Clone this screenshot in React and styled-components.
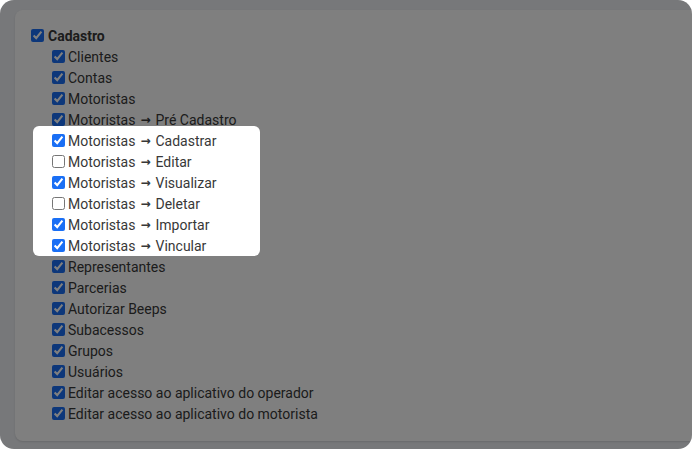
import React from "react";
import styled, { createGlobalStyle } from "styled-components";

const GlobalStyle = createGlobalStyle`
  html, body {
    margin: 0;
    padding: 0;
    background: #fff;
  }
  body {
    font-family: Roboto, "Liberation Sans", Arial, sans-serif;
  }
`;

const Frame = styled.div`
  position: relative;
  width: 692px;
  height: 449px;
  box-sizing: border-box;
  padding: 10px 0 8px 15px;
  border-radius: 14px;
  overflow: hidden;
  background: #eef0f4;
`;

const Panel = styled.div`
  height: 100%;
  box-sizing: border-box;
  padding: 15px 16px;
  background: #fff;
  border-radius: 8px 0 0 8px;
  box-shadow: 0 1px 2px rgba(0, 0, 0, 0.12);
`;

const Row = styled.label`
  display: flex;
  align-items: center;
  gap: ${(p) => (p.$parent ? "4px" : "3px")};
  height: 21px;
  padding-left: ${(p) => (p.$parent ? "0" : "21px")};
  font-size: 14px;
  font-weight: ${(p) => (p.$parent ? 700 : 400)};
  color: #383838;
  white-space: nowrap;
`;

const Box = styled.input.attrs({ type: "checkbox" })`
  width: 13px;
  height: 13px;
  margin: 0;
  flex-shrink: 0;
  accent-color: #1a6ff5;
`;

const Arrow = styled.span`
  font-family: "DejaVu Sans", sans-serif;
  font-size: 12px;
  font-weight: 700;
  margin: 0 5px 0 5px;
  position: relative;
  top: -1px;
`;

const Spotlight = styled.div`
  position: relative;

  &::after {
    content: "";
    position: absolute;
    left: 2px;
    top: -4px;
    width: 227px;
    height: 130px;
    border-radius: 6px;
    box-shadow: 0 0 0 2000px rgba(0, 0, 0, 0.5);
    pointer-events: none;
  }
`;

const before = [
  ["Clientes", true],
  ["Contas", true],
  ["Motoristas", true],
  ["Motoristas → Pré Cadastro", true],
];

const highlighted = [
  ["Motoristas → Cadastrar", true],
  ["Motoristas → Editar", false],
  ["Motoristas → Visualizar", true],
  ["Motoristas → Deletar", false],
  ["Motoristas → Importar", true],
  ["Motoristas → Vincular", true],
];

const after = [
  ["Representantes", true],
  ["Parcerias", true],
  ["Autorizar Beeps", true],
  ["Subacessos", true],
  ["Grupos", true],
  ["Usuários", true],
  ["Editar acesso ao aplicativo do operador", true],
  ["Editar acesso ao aplicativo do motorista", true],
];

const Label = ({ text }) => {
  const parts = text.split(" → ");
  if (parts.length === 1) return <span>{text}</span>;
  return (
    <span>
      {parts[0]}
      <Arrow>→</Arrow>
      {parts[1]}
    </span>
  );
};

const Item = ({ label, checked }) => (
  <Row>
    <Box defaultChecked={checked} />
    <Label text={label} />
  </Row>
);

export default function App() {
  return (
    <>
      <GlobalStyle />
      <Frame>
        <Panel>
          <Row $parent>
            <Box defaultChecked />
            Cadastro
          </Row>
          {before.map(([l, c]) => (
            <Item key={l} label={l} checked={c} />
          ))}
          <Spotlight>
            {highlighted.map(([l, c]) => (
              <Item key={l} label={l} checked={c} />
            ))}
          </Spotlight>
          {after.map(([l, c]) => (
            <Item key={l} label={l} checked={c} />
          ))}
        </Panel>
      </Frame>
    </>
  );
}
